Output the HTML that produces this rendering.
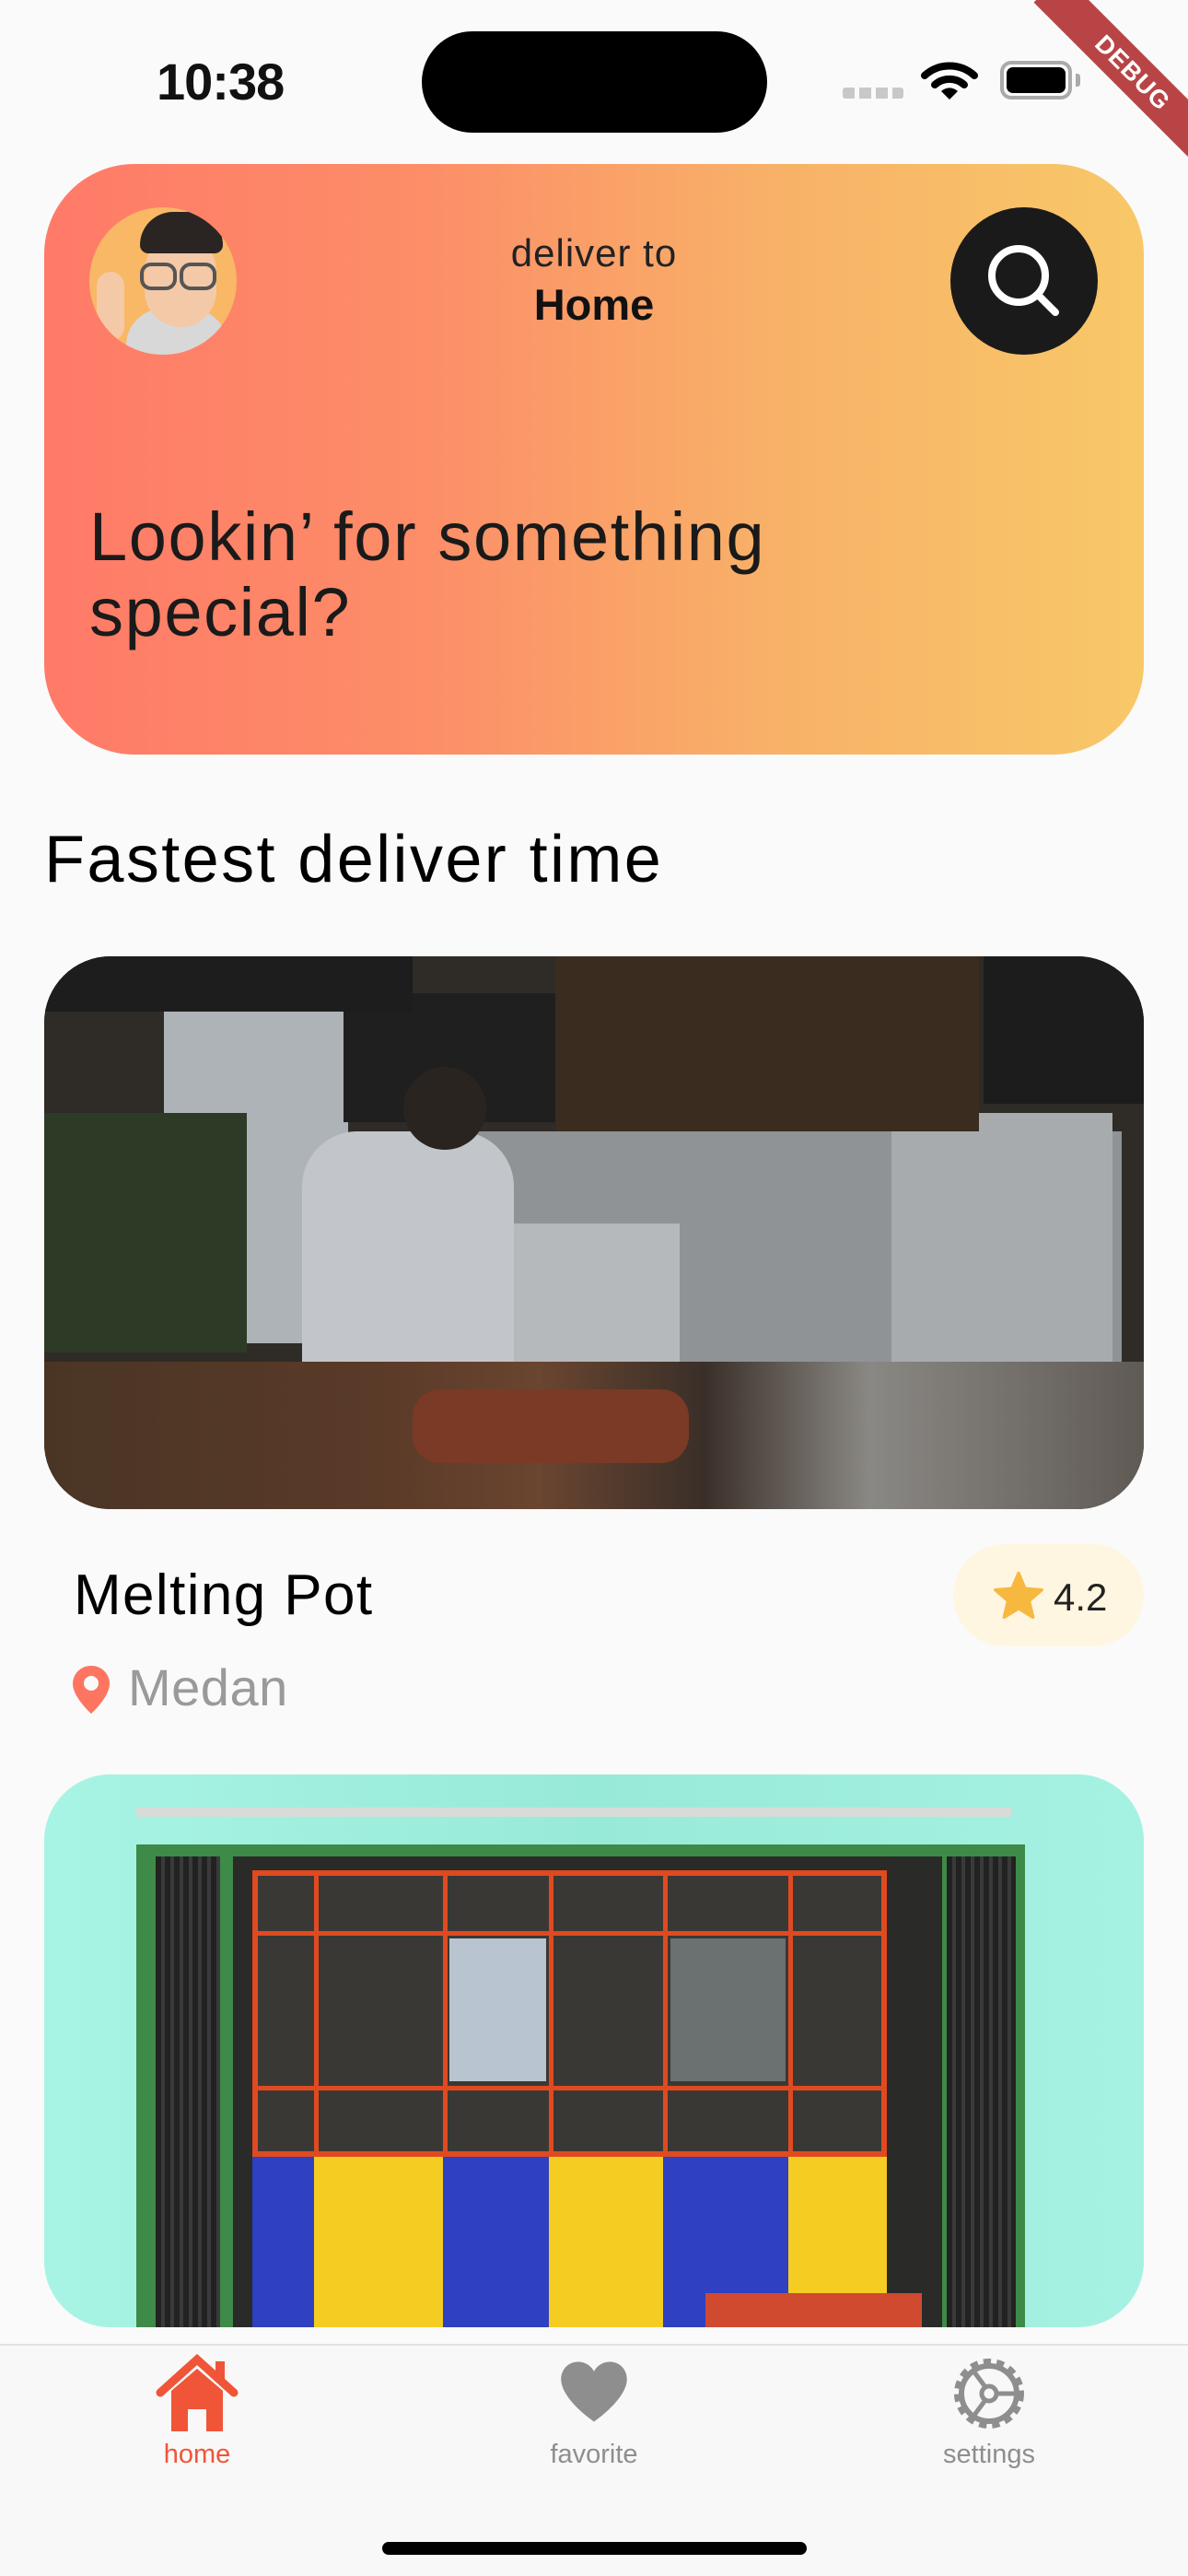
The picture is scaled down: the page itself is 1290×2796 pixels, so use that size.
<!DOCTYPE html>
<html><head><meta charset="utf-8"><style>
*{margin:0;padding:0;box-sizing:border-box}
body{width:1290px;height:2796px;background:#fafafa;position:relative;overflow:hidden;font-family:"Liberation Sans",sans-serif;color:#111}
.abs{position:absolute}
.img{position:absolute;left:48px;width:1194px;height:600px;border-radius:72px;overflow:hidden}
.img div{position:absolute}
</style></head><body>
<!-- status bar -->
<div class="abs" style="left:170px;top:56px;font-size:56px;font-weight:bold;letter-spacing:-1px">10:38</div>
<div class="abs" style="left:458px;top:34px;width:375px;height:110px;background:#000;border-radius:55px"></div>
<div class="abs" style="left:915px;top:95px;width:66px;height:12px;background:repeating-linear-gradient(90deg,#c8c8c8 0 13px,transparent 13px 18px);border-radius:3px"></div>
<svg class="abs" style="left:1000px;top:64px" width="62" height="46" viewBox="0 0 62 46"><path d="M4 18 A40 40 0 0 1 58 18" stroke="#000" stroke-width="8" fill="none" stroke-linecap="round"/><path d="M15 28 A24 24 0 0 1 47 28" stroke="#000" stroke-width="8" fill="none" stroke-linecap="round"/><path d="M31 44 L22 35 A13 13 0 0 1 40 35 Z" fill="#000"/></svg>
<div class="abs" style="left:1086px;top:66px;width:78px;height:42px;border:4px solid #aaa;border-radius:12px;padding:3px"><div style="width:100%;height:100%;background:#000;border-radius:7px"></div></div>
<div class="abs" style="left:1168px;top:80px;width:5px;height:14px;background:#aaa;border-radius:0 3px 3px 0"></div>
<div class="abs" style="left:1100px;top:57px;width:260px;height:44px;background:#b84446;transform:rotate(45deg);color:#fff;font-weight:bold;font-size:27px;text-align:center;line-height:44px;letter-spacing:1px">DEBUG</div>
<!-- header card -->
<div class="abs" style="left:48px;top:178px;width:1194px;height:641px;border-radius:98px;background:linear-gradient(90deg,#ff7a68 0%,#fc8e68 35%,#f8b068 65%,#f8c868 100%)"></div>
<div class="abs" style="left:97px;top:225px;width:160px;height:160px;border-radius:50%;background:#f8b865;overflow:hidden">
 <div class="abs" style="left:40px;top:110px;width:110px;height:80px;background:#d8d8d8;border-radius:40px 40px 0 0"></div>
 <div class="abs" style="left:60px;top:30px;width:78px;height:100px;background:#f3c9a8;border-radius:40px"></div>
 <div class="abs" style="left:55px;top:5px;width:90px;height:45px;background:#2a2522;border-radius:40px 40px 10px 10px"></div>
 <div class="abs" style="left:55px;top:60px;width:40px;height:30px;border:4px solid #555;border-radius:12px"></div>
 <div class="abs" style="left:98px;top:60px;width:40px;height:30px;border:4px solid #555;border-radius:12px"></div>
 <div class="abs" style="left:8px;top:70px;width:30px;height:75px;background:#f3c9a8;border-radius:15px"></div>
</div>
<div class="abs" style="left:445px;top:251px;width:400px;text-align:center;font-size:42px;letter-spacing:1px;color:#222">deliver to</div>
<div class="abs" style="left:445px;top:303px;width:400px;text-align:center;font-size:47px;font-weight:bold;color:#111">Home</div>
<div class="abs" style="left:1032px;top:225px;width:160px;height:160px;border-radius:50%;background:#1a1a1a"></div>
<svg class="abs" style="left:1062px;top:255px" width="100" height="100" viewBox="0 0 100 100"><circle cx="44" cy="44" r="29" stroke="#fff" stroke-width="8" fill="none"/><path d="M65 65 L84 84" stroke="#fff" stroke-width="8" stroke-linecap="round"/></svg>
<div class="abs" style="left:97px;top:542px;font-size:74px;line-height:82px;color:#1a1a1a;letter-spacing:1.6px">Lookin’ for something<br>special?</div>
<!-- section title -->
<div class="abs" style="left:48px;top:892px;font-size:72px;color:#000;letter-spacing:2.4px">Fastest deliver time</div>
<!-- image 1 -->
<div class="img" style="top:1038px;background:#3a3530">
 <div style="left:0;top:0;width:1194px;height:600px;background:#2f2b27"></div>
 <div style="left:130px;top:60px;width:200px;height:360px;background:#aeb3b8"></div>
 <div style="left:470px;top:190px;width:700px;height:270px;background:#8f9396"></div>
 <div style="left:920px;top:170px;width:240px;height:300px;background:#a8abae"></div>
 <div style="left:325px;top:40px;width:230px;height:140px;background:#1f1f1f"></div>
 <div style="left:555px;top:0;width:460px;height:190px;background:#3a2c1f"></div>
 <div style="left:1020px;top:0;width:174px;height:160px;background:#1c1c1c"></div>
 <div style="left:0;top:170px;width:220px;height:260px;background:#2d3a26"></div>
 <div style="left:280px;top:190px;width:230px;height:260px;background:#c2c6ca;border-radius:60px 60px 0 0"></div>
 <div style="left:390px;top:120px;width:90px;height:90px;background:#2a2420;border-radius:50%"></div>
 <div style="left:510px;top:290px;width:180px;height:180px;background:#b5b9bc"></div>
 <div style="left:0;top:440px;width:1194px;height:160px;background:linear-gradient(90deg,#4a3525,#5a3a28 30%,#6a4530 45%,#3a2f28 60%,#8a8884 75%,#605a55)"></div>
 <div style="left:400px;top:470px;width:300px;height:80px;background:#7a3a25;border-radius:30px"></div>
 <div style="left:0;top:0;width:400px;height:60px;background:#1d1d1d"></div>
</div>
<!-- info -->
<div class="abs" style="left:80px;top:1696px;font-size:62px;color:#000;letter-spacing:1.4px">Melting Pot</div>
<div class="abs" style="left:1035px;top:1676px;width:207px;height:111px;border-radius:56px;background:#fff6e2"></div>
<svg class="abs" style="left:1078px;top:1705px" width="56" height="54" viewBox="0 0 24 23"><path d="M12 1 L15 8.2 L22.8 8.8 L16.9 13.9 L18.7 21.5 L12 17.4 L5.3 21.5 L7.1 13.9 L1.2 8.8 L9 8.2 Z" fill="#f7b840" stroke="#f7b840" stroke-width="1.5" stroke-linejoin="round"/></svg>
<div class="abs" style="left:1144px;top:1710px;font-size:42px;color:#222">4.2</div>
<svg class="abs" style="left:77px;top:1806px" width="44" height="56" viewBox="0 0 22 28"><path d="M11 1 C5.5 1 1 5.3 1 10.8 C1 18 11 27 11 27 C11 27 21 18 21 10.8 C21 5.3 16.5 1 11 1 Z" fill="#fd7560"/><circle cx="11" cy="10.5" r="4" fill="#fafafa"/></svg>
<div class="abs" style="left:139px;top:1799px;font-size:56px;color:#9a9a9a;letter-spacing:0.5px">Medan</div>
<!-- image 2 -->
<div class="img" style="top:1926px;background:#9eeede">
 <div style="left:0;top:0;width:1194px;height:600px;background:linear-gradient(90deg,#a8f4e4,#98ead8 50%,#a6f2e2)"></div>
 <div style="left:100px;top:36px;width:950px;height:10px;background:#d8dcd8"></div>
 <div style="left:100px;top:76px;width:965px;height:524px;background:#3e8a48"></div>
 <div style="left:121px;top:89px;width:70px;height:511px;background:repeating-linear-gradient(90deg,#222 0 6px,#3a3a3a 6px 10px)"></div>
 <div style="left:980px;top:89px;width:75px;height:511px;background:repeating-linear-gradient(90deg,#222 0 6px,#3a3a3a 6px 10px)"></div>
 <div style="left:205px;top:89px;width:770px;height:511px;background:#2a2a28"></div>
 <div style="left:226px;top:104px;width:689px;height:311px;background:#3a3835;border:6px solid #e04a20"></div>
 <div style="left:226px;top:170px;width:689px;height:5px;background:#e04a20"></div>
 <div style="left:226px;top:338px;width:689px;height:5px;background:#e04a20"></div>
 <div style="left:293px;top:104px;width:5px;height:311px;background:#e04a20"></div>
 <div style="left:433px;top:104px;width:5px;height:311px;background:#e04a20"></div>
 <div style="left:548px;top:104px;width:5px;height:311px;background:#e04a20"></div>
 <div style="left:672px;top:104px;width:5px;height:311px;background:#e04a20"></div>
 <div style="left:808px;top:104px;width:5px;height:311px;background:#e04a20"></div>
 <div style="left:440px;top:178px;width:105px;height:155px;background:#b8c4d0"></div>
 <div style="left:680px;top:178px;width:125px;height:155px;background:#6b7070"></div>
 <div style="left:226px;top:415px;width:67px;height:185px;background:#2f40c0"></div>
 <div style="left:293px;top:415px;width:140px;height:185px;background:#f5cc22"></div>
 <div style="left:433px;top:415px;width:115px;height:185px;background:#2f40c0"></div>
 <div style="left:548px;top:415px;width:124px;height:185px;background:#f5cc22"></div>
 <div style="left:672px;top:415px;width:136px;height:185px;background:#2f40c0"></div>
 <div style="left:808px;top:415px;width:107px;height:165px;background:#f5cc22"></div>
 <div style="left:718px;top:563px;width:235px;height:37px;background:#d04a30"></div>
</div>
<!-- nav -->
<div class="abs" style="left:0;top:2544px;width:1290px;height:252px;background:#f8f8f8;border-top:2px solid #e2e2e2"></div>
<svg class="abs" style="left:168px;top:2555px" width="92" height="86" viewBox="0 0 46 43"><path d="M3 21 L23 3 L43 21" stroke="#f05538" stroke-width="4.5" fill="none" stroke-linecap="round"/><rect x="33" y="4" width="5" height="10" fill="#f05538"/><path d="M9 20 L23 8 L37 20 L37 42 L28 42 L28 30 L18 30 L18 42 L9 42 Z" fill="#f05538"/></svg>
<div class="abs" style="left:114px;top:2648px;width:200px;text-align:center;font-size:29px;color:#f05538">home</div>
<svg class="abs" style="left:606px;top:2560px" width="78" height="72" viewBox="0 0 24 22"><path d="M12 21 C12 21 1 13.5 1 6.8 C1 3.5 3.5 1 6.7 1 C9 1 11 2.3 12 4.2 C13 2.3 15 1 17.3 1 C20.5 1 23 3.5 23 6.8 C23 13.5 12 21 12 21 Z" fill="#8e8e8e"/></svg>
<div class="abs" style="left:545px;top:2648px;width:200px;text-align:center;font-size:29px;color:#8e8e8e">favorite</div>
<svg class="abs" style="left:1030px;top:2554px" width="88" height="88" viewBox="0 0 44 44"><circle cx="22" cy="22" r="17" stroke="#8e8e8e" stroke-width="4" fill="none" stroke-dasharray="4 3"/><circle cx="22" cy="22" r="15" stroke="#8e8e8e" stroke-width="3" fill="none"/><circle cx="22" cy="22" r="4" stroke="#8e8e8e" stroke-width="2.5" fill="none"/><path d="M26 22 L37 22 M20 18.5 L13 9 M20 25.5 L13 35" stroke="#8e8e8e" stroke-width="2.5"/></svg>
<div class="abs" style="left:974px;top:2648px;width:200px;text-align:center;font-size:29px;color:#8e8e8e">settings</div>
<div class="abs" style="left:415px;top:2759px;width:461px;height:14px;background:#000;border-radius:7px"></div>
</body></html>
